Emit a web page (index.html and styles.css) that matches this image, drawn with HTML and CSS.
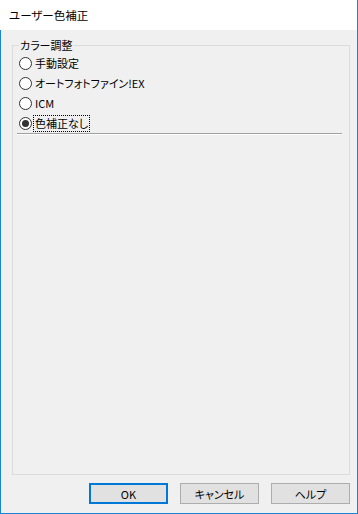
FILE: index.html
```html
<!DOCTYPE html>
<html lang="ja">
<head>
    <meta charset="UTF-8">
    <title>ユーザー色補正</title>
    <link rel="stylesheet" href="styles.css">
</head>
<body>
    <div class="window">
        <div class="titlebar">ユーザー色補正</div>
        <div class="client">
            <fieldset class="group">
                <legend>カラー調整</legend>
                <div class="option"><span class="radio"></span><span class="label">手動設定</span></div>
                <div class="option"><span class="radio"></span><span class="label">オートフォトファイン!EX</span></div>
                <div class="option"><span class="radio"></span><span class="label">ICM</span></div>
                <div class="option"><span class="radio checked"></span><span class="label focus">色補正なし</span></div>
                <div class="separator"></div>
            </fieldset>
            <div class="buttons">
                <button class="default">OK</button>
                <button>キャンセル</button>
                <button>ヘルプ</button>
            </div>
        </div>
    </div>
</body>
</html>
```
FILE: styles.css
```css
body {
    margin: 0;
    font-family: "Noto Sans CJK JP", "Noto Sans", sans-serif;
    font-size: 11px;
    font-feature-settings: "palt";
    color: #000;
}
.window {
    width: 358px;
    height: 514px;
    box-sizing: border-box;
    border-right: 1px solid #1883d7;
    display: flex;
    flex-direction: column;
}
.titlebar {
    height: 30px;
    line-height: 30px;
    padding-left: 9px;
    font-size: 11.5px;
    background: #fff;
}
.client {
    flex: 1;
    display: flex;
    flex-direction: column;
    min-height: 0;
    background: #f0f0f0;
    border-left: 1px solid #1883d7;
    border-bottom: 1px solid #1883d7;
    padding: 8px 7px 9px 11px;
}
.group {
    flex: 1;
    min-height: 0;
    margin: 0;
    padding: 1px 4px 0 4px;
    border: 1px solid #dcdcdc;
    min-width: 0;
}
.group legend {
    padding: 0 1px;
    margin-left: 2px;
    line-height: 14px;
}
.option {
    height: 20px;
    display: flex;
    align-items: center;
    padding-left: 2px;
}
.radio {
    width: 11px;
    height: 11px;
    border: 1px solid #333;
    border-radius: 50%;
    background: #fff;
    position: relative;
    margin-right: 2px;
}
.radio.checked::after {
    content: "";
    position: absolute;
    left: 2px;
    top: 2px;
    width: 7px;
    height: 7px;
    border-radius: 50%;
    background: #333;
}
.label {
    line-height: 15px;
    padding: 0 1px;
}
.label.focus {
    outline: 1px dotted #000;
}
.separator {
    height: 1px;
    background: #a0a0a0;
    border-bottom: 1px solid #fff;
    margin-right: 3px;
}
.buttons {
    display: flex;
    justify-content: flex-end;
    gap: 12px;
    margin-top: 8px;
}
button {
    width: 79px;
    height: 21px;
    padding: 0;
    font-family: inherit;
    font-size: 11px;
    font-feature-settings: "palt";
    color: #000;
    background: #e1e1e1;
    border: 1px solid #adadad;
}
button.default {
    border: 2px solid #0078d7;
}
```
